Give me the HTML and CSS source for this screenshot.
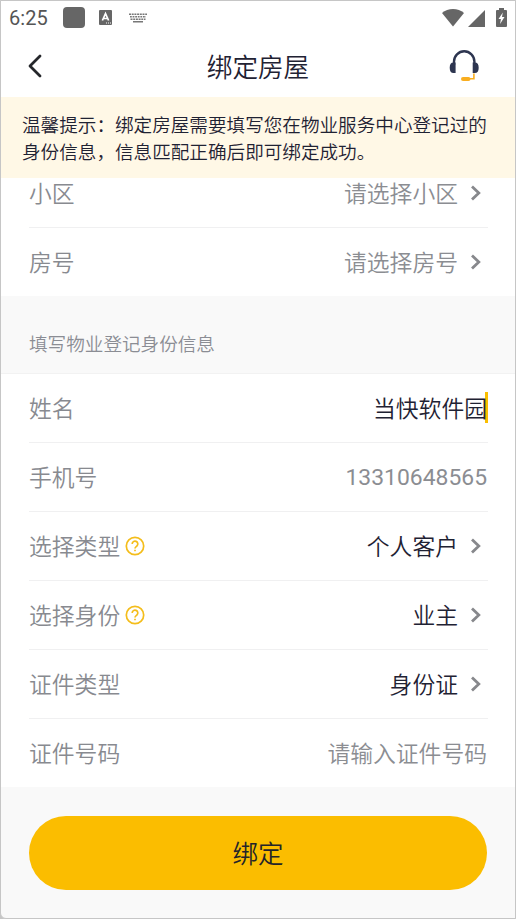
FILE: index.html
```html
<!DOCTYPE html>
<html lang="zh-CN">
<head>
<meta charset="utf-8">
<title>绑定房屋</title>
<link rel="stylesheet" href="styles.css">
</head>
<body>
<main class="screen">
  <div class="statusbar">
    <span class="time">6:25</span>
    <span class="app-square"></span>
    <svg class="lang-icon" width="13" height="15" viewBox="0 0 13 15"><rect width="13" height="15" rx="1" fill="#666"/><path d="M3.400 10.500L6.500 3.600l3.100 6.900M4.600 8.500h3.800" fill="none" stroke="#fff" stroke-width="1.700"/><path d="M7 13h1M9 13h1M11 13h1" stroke="#fff"/></svg>
    <svg class="keyboard-icon" width="18" height="10" viewBox="0 0 18 10"><g fill="none" stroke="#777" stroke-width="1.400"><path d="M0 1.200h18" stroke-dasharray="2 .7"/><path d="M1 3.800h16" stroke-dasharray="1.800 .8"/><path d="M1.500 6.300h15" stroke-dasharray="2 .7"/><path d="M4 8.700h10"/></g></svg>
    <span class="spacer"></span>
    <svg class="wifi-icon" width="22" height="18" viewBox="0 0 22 18"><path d="M0 4C6-1.300 16-1.300 22 4L11 17.500z" fill="#666"/></svg>
    <svg class="signal-icon" width="17" height="17" viewBox="0 0 17 17"><path d="M17 0v17H0z" fill="#666"/></svg>
    <svg class="battery-icon" width="11" height="19" viewBox="0 0 11 19"><path d="M3 0h5v2h2q1 0 1 1v15q0 1-1 1H1q-1 0-1-1V3q0-1 1-1h2z" fill="#666"/><path d="M6.800 4.500L2.500 11h2.400l-.8 5L8.500 9H6z" fill="#fff"/></svg>
  </div>
  <header class="header">
    <svg class="back" width="14" height="24" viewBox="0 0 14 24"><path d="M12 2L2 12l10 10" fill="none" stroke="#25272b" stroke-width="2.800" stroke-linecap="round" stroke-linejoin="round"/></svg>
    <h1 class="title">绑定房屋</h1>
    <svg class="headset" width="30" height="32" viewBox="0 0 30 32"><path d="M5 15v-3.500a10.200 10.200 0 0 1 20.400 0V15" fill="none" stroke="#2d3550" stroke-width="2.400"/><path d="M6.600 12.500v10.500H4.500Q.7 23 .7 17.800T4.500 12.500zM23.700 12.500v10.500h2.100q3.900 0 3.900-5.200t-3.900-5.300z" fill="#2d3550"/><path d="M24.900 23.500v5.300H19" fill="none" stroke="#f9ae20" stroke-width="1.600"/><rect x="12" y="27" width="9.500" height="4" rx="2" fill="#f9ae20"/></svg>
  </header>
  <p class="notice">温馨提示：绑定房屋需要填写您在物业服务中心登记过的身份信息，信息匹配正确后即可绑定成功。</p>
  <section class="group group-scrolled">
    <div class="row"><span class="label">小区</span><span class="value hint">请选择小区</span><svg class="arrow" width="11" height="16" viewBox="0 0 11 16"><path d="M2 1.500L8.800 8 2 14.500"/></svg></div>
    <div class="row"><span class="label">房号</span><span class="value hint">请选择房号</span><svg class="arrow" width="11" height="16" viewBox="0 0 11 16"><path d="M2 1.500L8.800 8 2 14.500"/></svg></div>
  </section>
  <h2 class="section-title">填写物业登记身份信息</h2>
  <section class="group group-form">
    <div class="row"><span class="label">姓名</span><span class="value focused">当快软件园</span></div>
    <div class="row"><span class="label">手机号</span><span class="value hint phone">13310648565</span></div>
    <div class="row"><span class="label">选择类型</span><svg class="help" width="20" height="20" viewBox="0 0 20 20"><circle cx="10" cy="10" r="8.700"/><path d="M7.200 8a2.800 2.800 0 1 1 4.700 2c-1.200 1-1.900 1.400-1.900 2.500M10 13.800v1.400"/></svg><span class="value">个人客户</span><svg class="arrow" width="11" height="16" viewBox="0 0 11 16"><path d="M2 1.500L8.800 8 2 14.500"/></svg></div>
    <div class="row"><span class="label">选择身份</span><svg class="help" width="20" height="20" viewBox="0 0 20 20"><circle cx="10" cy="10" r="8.700"/><path d="M7.200 8a2.800 2.800 0 1 1 4.700 2c-1.200 1-1.900 1.400-1.900 2.500M10 13.800v1.400"/></svg><span class="value">业主</span><svg class="arrow" width="11" height="16" viewBox="0 0 11 16"><path d="M2 1.500L8.800 8 2 14.500"/></svg></div>
    <div class="row"><span class="label">证件类型</span><span class="value">身份证</span><svg class="arrow" width="11" height="16" viewBox="0 0 11 16"><path d="M2 1.500L8.800 8 2 14.500"/></svg></div>
    <div class="row"><span class="label">证件号码</span><span class="value hint id-number">请输入证件号码</span></div>
  </section>
  <footer class="footer"><button class="submit">绑定</button></footer>
</main>
</body>
</html>
```
FILE: styles.css
```css
* { box-sizing: border-box; }
body { margin: 0; background: #c6c6c6; font-family: "Noto Sans CJK SC", sans-serif; font-weight: 350; color: #1f2233; }
.screen { display: flex; flex-direction: column; width: 516px; height: 919px; border: 1px solid #c6c6c6; border-radius: 0 0 0 6px; background: #f9f9f9; overflow: hidden; }
svg { display: block; flex: none; }

.statusbar { display: flex; align-items: center; flex: none; height: 33px; padding: 0 8px 0 7px; background: #fff; }
.time { width: 41px; padding-left: 1px; font: 400 20px/32px Roboto, sans-serif; color: #555; letter-spacing: .1px; }
.app-square { width: 22px; height: 21px; margin-left: 14px; border-radius: 4px; background: #666; }
.lang-icon { margin-left: 14px; }
.keyboard-icon { margin-left: 17px; }
.spacer { flex: 1; }
.signal-icon { margin: 1px 11px 0 4px; }

.header { display: flex; align-items: center; justify-content: space-between; flex: none; height: 63px; padding: 0 36px 0 27px; background: #fff; }
.title { margin: 0 0 0 25px; font-size: 25.6px; font-weight: inherit; line-height: 40px; }

.notice { flex: none; z-index: 1; height: 81px; margin: 0; padding: 13px 20px 0 21px; background: #fff8e6; font-size: 18.6px; line-height: 27.3px; }

.group { flex: none; background: #fff; padding: 0 27px 0 28px; }
.group-scrolled { margin-top: -19px; }
.row { display: flex; align-items: center; height: 69px; padding-bottom: 1px; border-bottom: 1px solid #f0f0f1; font-size: 22.8px; line-height: 34px; }
.row:last-child { height: 68px; border-bottom: 0; }
.label { color: #888a90; }
.value { margin-left: auto; }
.hint { color: #8b8d92; }
.phone { margin-right: 1px; padding-top: 3px; font-family: Roboto, sans-serif; font-weight: 400; font-size: 22.9px; }
.focused { width: 115px; height: 31px; border-right: 3px solid #fabe00; line-height: 31px; white-space: nowrap; }
.id-number { margin-right: 1px; }
.arrow { margin: 0 7px 0 12px; }
.arrow path { fill: none; stroke: #87888c; stroke-width: 2.8; }
.help { margin-left: 5px; fill: none; stroke: #f4bd1b; stroke-width: 1.7; }

.section-title { flex: none; height: 77px; margin: 0; padding: 33px 28px 0; font-size: 18.6px; font-weight: inherit; line-height: 27px; color: #8b8d94; }
.group-form { border-top: 1px solid #f2f2f2; }
.footer { padding: 29px 28px 0 28px; }
.submit { display: block; width: 100%; height: 74px; padding: 0 0 2px; border: 0; border-radius: 37px; background: #fbbd00; color: #24242a; font: 350 25.5px/72px "Noto Sans CJK SC", sans-serif; }
```
